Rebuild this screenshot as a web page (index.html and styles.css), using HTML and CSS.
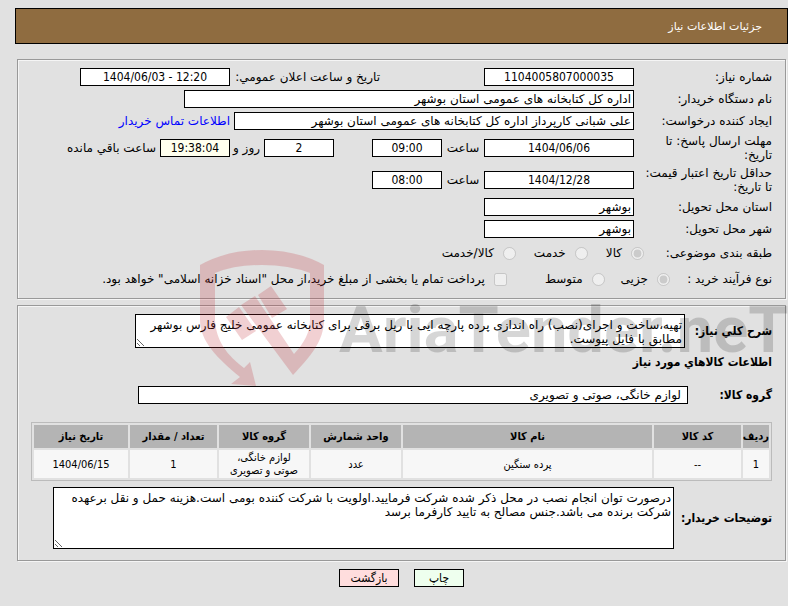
FILE: index.html
```html
<!DOCTYPE html>
<html lang="fa" dir="rtl">
<head>
    <meta charset="UTF-8">
    <meta name="viewport" content="width=device-width, initial-scale=1.0">
    <title>جزئیات اطلاعات نیاز</title>
    <link rel="stylesheet" href="styles.css">
</head>
<body>

<h1 class="page-title">جزئیات اطلاعات نیاز</h1>

<form class="need-form">
    <fieldset class="box">
        <div class="row">
            <label class="caption" for="needNo">شماره نیاز:</label>
            <div class="cell-first"><input type="text" id="needNo" class="field center" value="1104005807000035" readonly></div>
            <label class="caption-second" for="announce">تاریخ و ساعت اعلان عمومي:</label>
            <input type="text" id="announce" class="field center" value="1404/06/03 - 12:20" dir="ltr" readonly>
        </div>
        <div class="row">
            <label class="caption" for="buyer">نام دستگاه خریدار:</label>
            <input type="text" id="buyer" class="field buyer" value="اداره کل کتابخانه های عمومی استان بوشهر" readonly>
        </div>
        <div class="row">
            <label class="caption" for="creator">ایجاد کننده درخواست:</label>
            <input type="text" id="creator" class="field creator" value="علی شبانی کارپرداز اداره کل کتابخانه های عمومی استان بوشهر" readonly>
            <a href="#" class="contact">اطلاعات تماس خریدار</a>
        </div>
        <div class="row tall">
            <label class="caption" for="replyDate">مهلت ارسال پاسخ: تا تاریخ:</label>
            <div class="date-cell">
                <input type="text" id="replyDate" class="field center" value="1404/06/06" readonly>
                <label for="replyTime">ساعت</label>
                <input type="text" id="replyTime" class="field short center" value="09:00" readonly>
            </div>
            <div class="remain">
                <input type="text" id="days" class="field short center" value="2" readonly>
                <label class="day-word" for="days">روز و</label>
                <input type="text" id="timer" class="field short center timer" value="19:38:04" readonly>
                <label for="timer">ساعت باقي مانده</label>
            </div>
        </div>
        <div class="row tall">
            <label class="caption" for="priceDate">حداقل تاریخ اعتبار قیمت: تا تاریخ:</label>
            <div class="date-cell">
                <input type="text" id="priceDate" class="field center" value="1404/12/28" readonly>
                <label for="priceTime">ساعت</label>
                <input type="text" id="priceTime" class="field short center" value="08:00" readonly>
            </div>
        </div>
        <div class="row">
            <label class="caption" for="province">استان محل تحویل:</label>
            <input type="text" id="province" class="field" value="بوشهر" readonly>
        </div>
        <div class="row">
            <label class="caption" for="city">شهر محل تحویل:</label>
            <input type="text" id="city" class="field" value="بوشهر" readonly>
        </div>
        <div class="row options">
            <span class="caption subject">طبقه بندی موضوعی:</span>
            <label class="option"><input type="radio" name="subject" checked disabled>کالا</label>
            <label class="option"><input type="radio" name="subject" disabled>خدمت</label>
            <label class="option"><input type="radio" name="subject" disabled>کالا/خدمت</label>
        </div>
        <div class="row options">
            <span class="caption process">نوع فرآیند خرید :</span>
            <label class="option"><input type="radio" name="process" checked disabled>جزیی</label>
            <label class="option"><input type="radio" name="process" disabled>متوسط</label>
            <label class="option treasury"><input type="checkbox" disabled>پرداخت تمام یا بخشی از مبلغ خرید،از محل "اسناد خزانه اسلامی" خواهد بود.</label>
        </div>
    </fieldset>

    <fieldset class="box goods">
        <div class="line">
            <label class="bold" for="summary">شرح کلي نیاز:</label>
            <textarea id="summary" class="area summary" readonly>تهیه،ساخت و اجرای(نصب) راه اندازی پرده پارچه ایی با ریل برقی برای کتابخانه عمومی خلیج فارس بوشهر مطابق با فایل پیوست.</textarea>
        </div>
        <h2 class="bold">اطلاعات کالاهاي مورد نیاز</h2>
        <div class="line group-line">
            <label class="bold group-caption" for="group">گروه کالا:</label>
            <input type="text" id="group" class="field group" value="لوازم خانگی، صوتی و تصویری" readonly>
        </div>
        <table class="items">
            <thead>
                <tr>
                    <th class="c-row">ردیف</th>
                    <th class="c-code">کد کالا</th>
                    <th>نام کالا</th>
                    <th class="c-unit">واحد شمارش</th>
                    <th class="c-unit">گروه کالا</th>
                    <th class="c-code">تعداد / مقدار</th>
                    <th class="c-date">تاریخ نیاز</th>
                </tr>
            </thead>
            <tbody>
                <tr>
                    <td>1</td>
                    <td>--</td>
                    <td>پرده سنگین</td>
                    <td>عدد</td>
                    <td class="wrap">لوازم خانگی، صوتی و تصویری</td>
                    <td>1</td>
                    <td>1404/06/15</td>
                </tr>
            </tbody>
        </table>
        <div class="line">
            <label class="bold notes-caption" for="notes">توضیحات خریدار:</label>
            <textarea id="notes" class="area notes" readonly>درصورت توان انجام نصب در محل ذکر شده شرکت فرمایید.اولویت با شرکت کننده بومی است.هزینه حمل و نقل برعهده شرکت برنده می باشد.جنس مصالح به تایید کارفرما برسد</textarea>
        </div>
    </fieldset>

    <div class="buttons">
        <button type="button" class="btn print">چاپ</button>
        <button type="button" class="btn back">بازگشت</button>
    </div>
</form>

<div class="watermark" dir="ltr">
    <svg class="shield" width="128" height="140" viewBox="0 0 128 140" aria-hidden="true">
        <path d="M1 16Q28 1 63 1T125 16V71C125 92 111 108 94 126L42 56L56 47L95 105C105 94 111 84 111 71V24Q90 16 63 16T16 24V71C17 92 28 106 45 119L51 113L57 137L32 135L41 128C18 109 1 92 1 71Z"/>
        <path d="M27 68L40 58L57 82L43 91Z"/>
        <path d="M59 46L72 37L88 60L73 69Z"/>
    </svg>
    <span class="brand">AriaTender.neT</span>
</div>

</body>
</html>
```
FILE: styles.css
```css
body {
    margin: 8px 0 0 15px;
    background-color: #e1e1e1;
    font-family: "DejaVu Sans", sans-serif;
    font-size: 12px;
    line-height: 14px;
    color: #000;
}
.page-title {
    box-sizing: border-box;
    margin: 0 0 15px;
    height: 36px;
    padding: 0 25px;
    border: 1px solid #000;
    background-color: #8f6c40;
    color: #fff;
    font-size: 11px;
    font-weight: normal;
    line-height: 36px;
}
.need-form {
    margin: 0;
}
.box {
    margin: 0 2px 6px;
    padding: 6px 13px;
    border: 1px solid #999;
    box-shadow: inset 1px 1px 0 #f5f5f5, 1px 1px 0 #f5f5f5;
    min-width: 0;
}
.goods {
    padding: 8px 13px 11px;
}
.row {
    display: flex;
    align-items: center;
    min-height: 22px;
}
.row.tall {
    min-height: 32px;
}
.row.options {
    min-height: 26px;
}
.caption {
    flex: none;
    box-sizing: border-box;
    width: 138px;
    padding-left: 10px;
}
.field {
    box-sizing: border-box;
    width: 150px;
    height: 18px;
    padding: 0 2px;
    border: 1px solid #000;
    background-color: #fff;
    font-family: inherit;
    font-size: 12px;
    color: #000;
}
.center {
    font-family: "DejaVu Sans Condensed", "DejaVu Sans", sans-serif;
    text-align: center;
}
.short {
    width: 70px;
}
.buyer {
    width: 450px;
}
.creator {
    width: 400px;
}
.timer {
    background-color: #ffffee;
}
.cell-first {
    width: 254px;
}
.caption-second {
    width: 150px;
}
.contact {
    margin-right: 4px;
    color: #00f;
    text-decoration: none;
}
.date-cell {
    display: flex;
    align-items: center;
    justify-content: space-between;
    width: 262px;
    margin-left: 38px;
}
.remain {
    display: flex;
    align-items: center;
    gap: 4px;
}
.day-word {
    width: 22px;
    padding-left: 4px;
    white-space: nowrap;
}
.subject {
    width: 128px;
    padding: 0;
}
.process {
    width: 102px;
    padding: 0;
}
.option {
    display: flex;
    align-items: center;
    gap: 9px;
    margin-left: 18px;
    white-space: nowrap;
}
.process ~ .option {
    margin-left: 16px;
}
.option input {
    width: 13px;
    height: 13px;
    margin: 0;
}
.process ~ .treasury {
    margin: 0 22px 0 0;
}
.line {
    display: flex;
    align-items: center;
    gap: 4px;
}
.bold {
    flex: none;
    min-width: 83px;
    margin: 0;
    font-family: "DejaVu Sans Condensed", "DejaVu Sans", sans-serif;
    font-size: 12px;
    font-weight: bold;
}
h2.bold {
    margin: 7px 0;
}
.notes-caption {
    min-width: 94px;
}
.area {
    box-sizing: border-box;
    padding: 3px 2px;
    border: 1px solid #000;
    background-color: #fff;
    font-family: inherit;
    font-size: 12px;
    line-height: 14px;
    color: #000;
    overflow: hidden;
}
.summary {
    width: 550px;
    height: 34px;
}
.notes {
    width: 621px;
    height: 62px;
}
.group-line {
    margin: 17px 0 18px;
}
.group-caption {
    min-width: 80px;
}
.group {
    width: 550px;
    padding: 0 6px;
}
.items {
    width: 100%;
    margin-bottom: 6px;
    table-layout: fixed;
    border: 1px solid #bbb;
    border-spacing: 2px;
    font-family: "DejaVu Sans Condensed", "DejaVu Sans", sans-serif;
    font-size: 11px;
    text-align: center;
}
.items th {
    height: 23px;
    padding: 0;
    background-color: #b4b4b4;
}
.items td {
    height: 28px;
    padding: 0;
    background-color: #f7f7f7;
    line-height: 13px;
}
.items .wrap {
    padding: 0 6px;
}
.c-row {
    width: 26px;
}
.c-code {
    width: 87px;
}
.c-unit {
    width: 90px;
}
.c-date {
    width: 94px;
}
.buttons {
    display: flex;
    justify-content: center;
    gap: 15px;
    margin-top: 8px;
}
.btn {
    width: 50px;
    height: 18px;
    padding: 0;
    border: 1px solid #000;
    background-color: #eeffee;
    font-family: "DejaVu Sans Condensed", "DejaVu Sans", sans-serif;
    font-size: 12px;
    line-height: 16px;
}
.back {
    width: 60px;
    background-color: #ffdddd;
}
/* logo laid over the form */
.watermark {
    position: absolute;
    top: 249px;
    left: 199px;
    right: 0;
    display: flex;
    overflow: hidden;
    pointer-events: none;
}
.shield {
    flex: none;
    fill: rgba(190, 40, 50, 0.22);
}
.brand {
    margin: 39px 0 0 12px;
    color: rgba(0, 0, 0, 0.16);
    font-family: Roboto, "Liberation Sans", sans-serif;
    font-size: 65px;
    font-weight: bold;
    line-height: 84px;
    white-space: nowrap;
}
```
